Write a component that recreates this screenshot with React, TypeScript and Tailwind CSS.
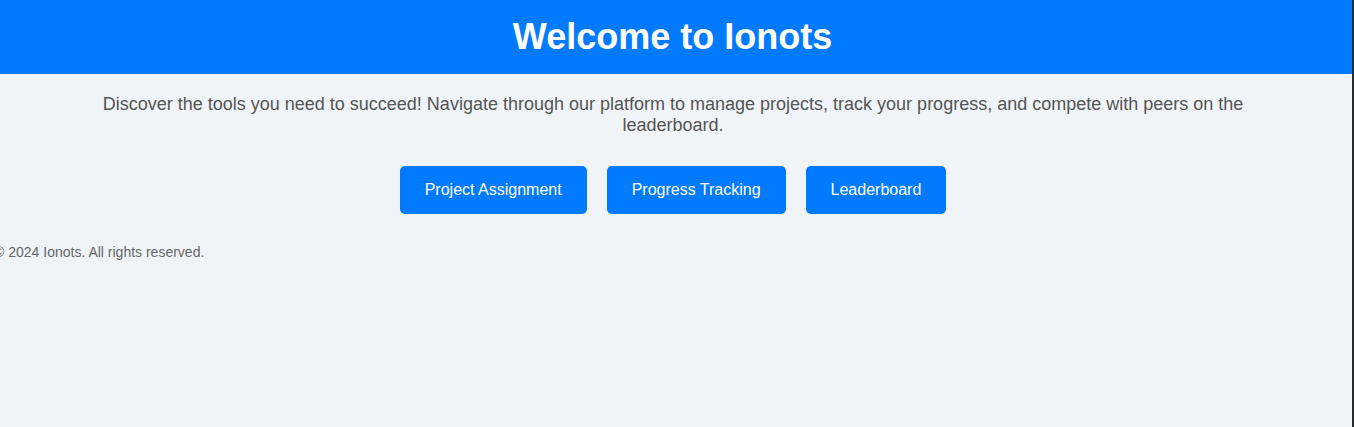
const buttons = ["Project Assignment", "Progress Tracking", "Leaderboard"];

function App() {
  return (
    <div className="min-h-screen w-full flex bg-[#f0f4f8] font-['Liberation_Sans',Arial,sans-serif] overflow-hidden">
      <div className="flex-1 flex flex-col min-w-0">
        <header className="bg-[#007bff] py-4 pr-[7px] text-center">
          <h1 className="text-[36px] leading-[normal] font-bold text-white">
            Welcome to Ionots
          </h1>
        </header>

        <main className="pr-[6px] flex flex-col items-center">
          <p className="mt-5 w-[1160px] text-center text-[18px] leading-[normal] text-[#555]">
            Discover the tools you need to succeed! Navigate through our
            platform to manage projects, track your progress, and compete with
            peers on the leaderboard.
          </p>
          <div className="mt-[30px] flex gap-5">
            {buttons.map((label) => (
              <button
                key={label}
                className="bg-[#007bff] text-white text-[16px] leading-[normal] px-[25px] py-[15px] rounded-[5px]"
              >
                {label}
              </button>
            ))}
          </div>
        </main>

        <footer className="mt-[30px] -ml-[6px] text-[14px] leading-[normal] text-[#666]">
          © 2024 Ionots. All rights reserved.
        </footer>
      </div>
      <div className="w-[2px] bg-[#2b2b2b]" />
    </div>
  );
}

export default App;
